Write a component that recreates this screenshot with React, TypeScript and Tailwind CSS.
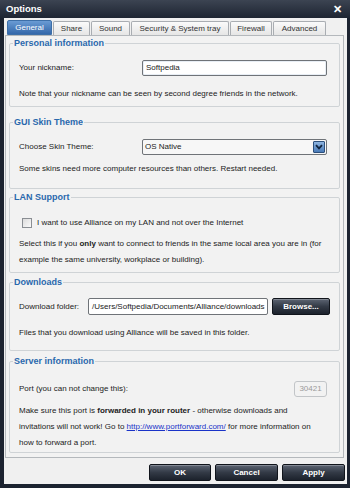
import React from 'react';

const tabs = ['General', 'Share', 'Sound', 'Security & System tray', 'Firewall', 'Advanced'];
const tabWidths = ['w-[45px]', 'w-[37px]', 'w-[39px]', 'w-[98px]', 'w-[42px]', 'w-[53px]'];

const Group: React.FC<{ title: string; className: string; children: React.ReactNode }> = ({ title, className, children }) => (
  <fieldset className={`border border-[#cfd3d6] rounded-[2px] mx-[2px] px-[9px] ${className}`}>
    <legend className="ml-[-6px] px-[1px] text-[9px] leading-[10px] font-bold text-[#2a68ad]">{title}</legend>
    {children}
  </fieldset>
);

const DarkButton: React.FC<{ label: string; className: string }> = ({ label, className }) => (
  <button className={`h-[17px] rounded-[2px] border border-[#10141b] bg-gradient-to-b from-[#5d6573] via-[#333a46] to-[#1c222c] text-white text-[8px] font-bold shadow-[inset_0_1px_0_rgba(255,255,255,0.25)] ${className}`}>
    {label}
  </button>
);

export default function App() {
  return (
    <div className="w-[350px] h-[488px] bg-[#1c2330] flex flex-col text-[8px] text-[#222]" style={{ fontFamily: '"Liberation Sans", Arial, sans-serif' }}>
      {/* title bar */}
      <div className="h-[18px] shrink-0 flex items-center justify-between px-[6px] bg-gradient-to-b from-[#3c4452] to-[#1e2532]">
        <span className="text-white text-[9.5px] font-bold">Options</span>
        <span className="text-white text-[11px] font-bold leading-none mr-[2px]">✕</span>
      </div>

      <div className="flex-1 ml-[4px] mr-[3px] mb-[4px] bg-[#f0f0f0] flex flex-col">
        {/* tabs */}
        <div className="flex items-end h-[17px] pl-[3px] gap-[1px]">
          {tabs.map((t, i) => (
            <div
              key={t}
              className={
                i === 0
                  ? `${tabWidths[i]} h-[15px] flex items-center justify-center rounded-t-[2px] border border-[#3d6fa8] bg-gradient-to-b from-[#6a9bd4] to-[#3468aa] text-white`
                  : `${tabWidths[i]} h-[14px] flex items-center justify-center rounded-t-[2px] border border-b-0 border-[#a9adb2] bg-gradient-to-b from-[#fafafa] to-[#e6e6e6] text-[#333]`
              }
            >
              {t}
            </div>
          ))}
        </div>

        {/* tab panel */}
        <div className="ml-[1px] mr-[3px] h-[423px] border border-[#b4b8bc] bg-[#f2f2f2] flex flex-col pt-[2px] px-[1px]">
          <Group title="Personal information" className="h-[69px]">
            <div className="flex items-center justify-between mt-[12px]">
              <span>Your nickname:</span>
              <div className="w-[185px] h-[16px] mr-[3px] rounded-[2px] border border-[#6f7378] bg-white flex items-center px-[3px] shadow-[inset_0_0_0_1px_#e8eef5]">Softpedia</div>
            </div>
            <p className="mt-[12px]">Note that your nickname can be seen by second degree friends in the network.</p>
          </Group>

          <Group title="GUI Skin Theme" className="h-[72px] mt-[10px]">
            <div className="flex items-center justify-between mt-[12px]">
              <span>Choose Skin Theme:</span>
              <div className="w-[185px] h-[16px] mr-[3px] rounded-[2px] border border-[#6f7378] bg-[#f7f7f7] flex items-center justify-between pl-[2px] pr-[1px]">
                <span>OS Native</span>
                <span className="w-[12px] h-[12px] rounded-[1px] border border-[#2c4f7c] bg-gradient-to-b from-[#8db4e0] to-[#4a7bb8] flex items-center justify-center">
                  <svg width="8" height="6" viewBox="0 0 8 6"><path d="M1 1.2 L4 4.4 L7 1.2" fill="none" stroke="#10243f" strokeWidth="1.8" /></svg>
                </span>
              </div>
            </div>
            <p className="mt-[8px]">Some skins need more computer resources than others. Restart needed.</p>
          </Group>

          <Group title="LAN Support" className="h-[81px] mt-[3px]">
            <div className="flex items-center mt-[15px] ml-[3px] gap-[5px]">
              <span className="w-[10px] h-[10px] border border-[#8a8e93] bg-gradient-to-br from-[#dcdcdc] to-[#fafafa]" />
              <span>I want to use Alliance on my LAN and not over the Internet</span>
            </div>
            <p className="mt-[7px] leading-[16px]">
              Select this if you <b>only</b> want to connect to friends in the same local area you are in (for
              <br />
              example the same university, workplace or building).
            </p>
          </Group>

          <Group title="Downloads" className="h-[74px] mt-[4px]">
            <div className="flex items-center mt-[11px]">
              <span>Download folder:</span>
              <div className="w-[180px] h-[17px] ml-[9px] rounded-[2px] border border-[#6f7378] bg-white flex items-center pl-[3px] overflow-hidden whitespace-nowrap">/Users/Softpedia/Documents/Alliance/downloads</div>
              <DarkButton label="Browse..." className="w-[58px] ml-[4px]" />
            </div>
            <p className="mt-[12px]">Files that you download using Alliance will be saved in this folder.</p>
          </Group>

          <Group title="Server information" className="h-[97px] mt-[5px]">
            <div className="flex items-center justify-between mt-[15px]">
              <span>Port (you can not change this):</span>
              <div className="w-[33px] h-[16px] mr-[3px] rounded-[3px] border border-[#c2c5c8] bg-[#f2f2f2] text-[#9a9a9a] flex items-center justify-center">30421</div>
            </div>
            <p className="mt-[6px] leading-[16px]">
              Make sure this port is <b>forwarded in your router</b> - otherwise downloads and
              <br />
              invitations will not work! Go to <span className="text-[#1a33c8] underline">http://www.portforward.com/</span> for more information on
              <br />
              how to forward a port.
            </p>
          </Group>
        </div>

        {/* buttons */}
        <div className="flex justify-end gap-[4px] mt-[6px] mr-[2px]">
          <DarkButton label="OK" className="w-[62px]" />
          <DarkButton label="Cancel" className="w-[63px]" />
          <DarkButton label="Apply" className="w-[63px]" />
        </div>
      </div>
    </div>
  );
}
